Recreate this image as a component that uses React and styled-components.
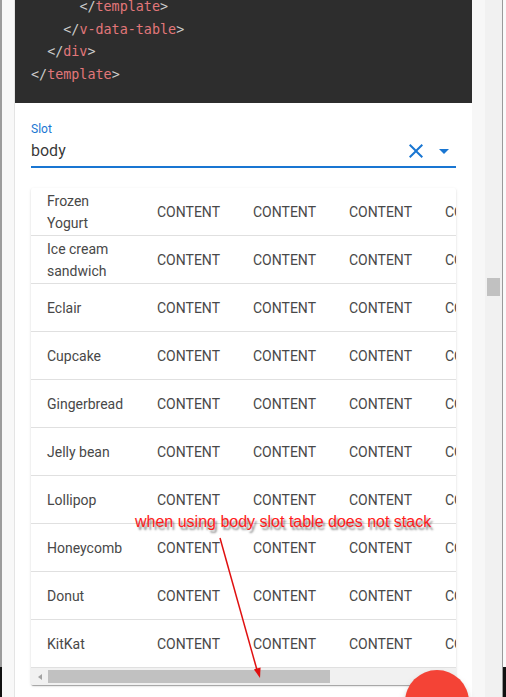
import React from 'react';
import styled, { createGlobalStyle } from 'styled-components';

const GlobalStyle = createGlobalStyle`
  html, body {
    margin: 0;
    padding: 0;
    width: 506px;
    height: 697px;
    overflow: hidden;
    background: #f5f5f5;
  }
  * {
    box-sizing: border-box;
  }
`;

const CODE_LINES = [
  { indent: 6, tag: 'template' },
  { indent: 4, tag: 'v-data-table' },
  { indent: 2, tag: 'div' },
  { indent: 0, tag: 'template' },
];

const DESSERTS = [
  'Frozen Yogurt',
  'Ice cream sandwich',
  'Eclair',
  'Cupcake',
  'Gingerbread',
  'Jelly bean',
  'Lollipop',
  'Honeycomb',
  'Donut',
  'KitKat',
];

const Page = styled.div`
  position: relative;
  display: flex;
  width: 506px;
  height: 697px;
  overflow: hidden;
  font-family: Roboto, 'Liberation Sans', sans-serif;
`;

const WindowEdge = styled.div`
  display: flex;
  flex-direction: column;
  width: ${(p) => p.width}px;
  background: ${(p) => p.bg};
  border-left: ${(p) => (p.line ? '1px solid #9a9a9a' : 'none')};
`;

const EdgeFill = styled.div`
  flex: 1;
`;

const EdgeFoot = styled.div`
  height: ${(p) => p.height}px;
  background: #111;
`;

const Gutter = styled.div`
  width: ${(p) => p.width}px;
  background: ${(p) => p.bg};
  border-right: ${(p) => (p.line ? '1px solid #e4e4e4' : 'none')};
`;

const PageTrack = styled.div`
  width: 17px;
  padding: 278px 2px 0;
  background: #f1f1f1;
`;

const PageThumb = styled.div`
  height: 18px;
  background: #c1c1c1;
`;

const Card = styled.div`
  display: flex;
  flex-direction: column;
  width: 457px;
  background: #fff;
  overflow: hidden;
`;

const CodeBlock = styled.div`
  display: flex;
  flex-direction: column;
  justify-content: flex-end;
  height: 103px;
  flex-shrink: 0;
  padding: 0 16px 17px;
  background: #2d2d2d;
  overflow: hidden;
  font-family: 'DejaVu Sans Mono', 'Liberation Mono', monospace;
  font-size: 13.4px;
  line-height: 22.5px;
  white-space: pre;
`;

const Punct = styled.span`
  color: #cccccc;
`;

const TagName = styled.span`
  color: #e2777a;
`;

const Field = styled.div`
  margin-top: 18px;
  padding: 0 16px;
`;

const Label = styled.div`
  font-size: 12px;
  line-height: 16px;
  color: #1976d2;
`;

const InputRow = styled.div`
  display: flex;
  align-items: center;
  gap: 4px;
  height: 31px;
  border-bottom: 2px solid #1976d2;
  padding-bottom: 2px;
`;

const Value = styled.div`
  flex: 1;
  font-size: 16px;
  color: rgba(0, 0, 0, 0.8);
`;

const IconBox = styled.svg`
  width: 24px;
  height: 24px;
  fill: #1976d2;
`;

const Table = styled.div`
  margin: 20px 16px 0;
  border-radius: 2px;
  overflow: hidden;
  background: #fff;
  box-shadow: 0 2px 1px -1px rgba(0, 0, 0, 0.2), 0 1px 1px 0 rgba(0, 0, 0, 0.14),
    0 1px 3px 0 rgba(0, 0, 0, 0.12);
`;

const Row = styled.div`
  display: grid;
  grid-template-columns: 110px repeat(5, 96px);
  width: max-content;
  height: 48px;
  border-bottom: 1px solid rgba(0, 0, 0, 0.12);
  &:last-child {
    border-bottom: none;
  }
`;

const Cell = styled.div`
  display: flex;
  align-items: center;
  padding: 0 16px;
  font-size: 14px;
  line-height: 22px;
  color: #484848;
  white-space: ${(p) => (p.wrap ? 'normal' : 'nowrap')};
`;

const HScroll = styled.div`
  display: flex;
  align-items: center;
  height: 17px;
  background: #f1f1f1;
`;

const ScrollArrow = styled.div`
  display: flex;
  align-items: center;
  justify-content: center;
  width: 17px;
  height: 17px;
  &::before {
    content: '';
    border-style: solid;
    border-width: 3.5px 4px 3.5px 0;
    border-color: transparent #a3a3a3 transparent transparent;
  }
`;

const ScrollThumb = styled.div`
  width: 282px;
  height: 13px;
  background: #c1c1c1;
`;

const Note = styled.div`
  position: absolute;
  left: 135px;
  top: 512px;
  font-family: 'Liberation Sans', Arial, sans-serif;
  font-size: 16px;
  line-height: 20px;
  color: #ff1a1a;
  text-shadow: 2px 3px 2px rgba(0, 0, 0, 0.45);
  white-space: nowrap;
`;

const Overlay = styled.svg`
  position: absolute;
  left: 0;
  top: 0;
  pointer-events: none;
`;

const Fab = styled.div`
  position: absolute;
  left: 405px;
  top: 670px;
  width: 64px;
  height: 64px;
  border-radius: 50%;
  background: #f44336;
  box-shadow: 0 3px 5px -1px rgba(0, 0, 0, 0.2), 0 6px 10px 0 rgba(0, 0, 0, 0.14);
`;

const CodeLine = ({ indent, tag }) => (
  <div>
    {' '.repeat(indent)}
    <Punct>{'</'}</Punct>
    <TagName>{tag}</TagName>
    <Punct>&gt;</Punct>
  </div>
);

const App = () => {
  return (
    <Page>
      <GlobalStyle />
      <WindowEdge width={2} bg="#9c9c9c">
        <EdgeFill />
        <EdgeFoot height={30} />
      </WindowEdge>
      <Gutter width={13} bg="#f8f8f8" line />

      <Card>
        <CodeBlock>
          {CODE_LINES.map((line, i) => (
            <CodeLine key={i} {...line} />
          ))}
        </CodeBlock>

        <Field>
          <Label>Slot</Label>
          <InputRow>
            <Value>body</Value>
            <IconBox viewBox="0 0 24 24">
              <path d="M19,6.41L17.59,5L12,10.59L6.41,5L5,6.41L10.59,12L5,17.59L6.41,19L12,13.41L17.59,19L19,17.59L13.41,12L19,6.41Z" />
            </IconBox>
            <IconBox viewBox="0 0 24 24">
              <path d="M7,10L12,15L17,10H7Z" />
            </IconBox>
          </InputRow>
        </Field>

        <Table>
          {DESSERTS.map((name) => (
            <Row key={name}>
              <Cell wrap>{name}</Cell>
              {[0, 1, 2, 3, 4].map((c) => (
                <Cell key={c}>CONTENT</Cell>
              ))}
            </Row>
          ))}
          <HScroll>
            <ScrollArrow />
            <ScrollThumb />
          </HScroll>
        </Table>
      </Card>

      <Gutter width={13} bg="#f7f7f7" />
      <PageTrack>
        <PageThumb />
      </PageTrack>
      <WindowEdge width={4} bg="#fafafa" line>
        <EdgeFill />
        <EdgeFoot height={30} />
      </WindowEdge>

      <Note>when using body slot table does not stack</Note>
      <Overlay width="506" height="697" viewBox="0 0 506 697">
        <line x1="220" y1="538" x2="257" y2="670" stroke="#e01010" strokeWidth="1.5" />
        <polygon points="260,678 253.9,669.4 260.6,667.4" fill="#e01010" />
      </Overlay>
      <Fab />
    </Page>
  );
};

export default App;
